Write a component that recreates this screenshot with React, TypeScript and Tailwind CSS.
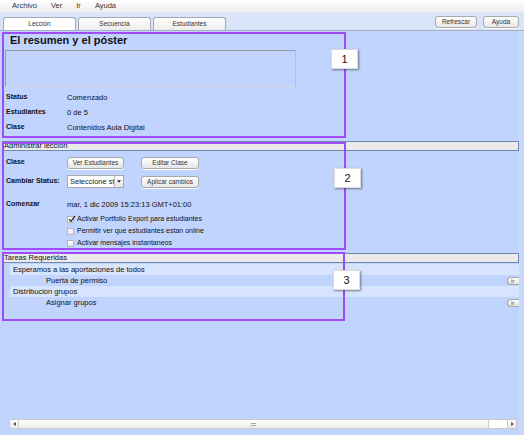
import React from "react";

const font = { fontFamily: '"Liberation Sans", Arial, sans-serif' };

function Btn({ children, w }: { children: React.ReactNode; w: string }) {
  return (
    <div
      className={`${w} h-[12px] flex items-center justify-center rounded-[3px] border border-[#a9a9a9] bg-gradient-to-b from-white to-[#e6e6e6] text-[6.5px] text-[#333] whitespace-nowrap shadow-[0_1px_0_#fff]`}
    >
      {children}
    </div>
  );
}

function Tab({ label, active }: { label: string; active?: boolean }) {
  return (
    <div
      className={`w-[73px] h-[13px] flex items-center justify-center rounded-t-[3px] border border-b-0 border-[#a3a9b5] text-[6.5px] text-[#333] ${
        active ? "bg-white" : "bg-gradient-to-b from-white to-[#ececec]"
      }`}
    >
      {label}
    </div>
  );
}

function Marker({ n, cls }: { n: string; cls: string }) {
  return (
    <div
      className={`absolute ${cls} w-[27px] h-[20px] bg-white flex items-center justify-center text-[11px] text-[#111] shadow-[1px_1px_2px_rgba(0,0,0,0.45)] border border-[#ddd]`}
    >
      {n}
    </div>
  );
}

function Check({ label, checked }: { label: string; checked?: boolean }) {
  return (
    <div className="h-[12px] flex items-center pl-[67px]">
      <div className="w-[7px] h-[7px] border border-[#b5b5b5] bg-gradient-to-b from-white to-[#e8e8e8] relative">
        {checked && (
          <svg viewBox="0 0 8 8" className="absolute -top-[2px] left-0 w-[8px] h-[8px]">
            <path d="M1.2 4.2 L3 6.3 L7 0.8" stroke="#222" strokeWidth="1.2" fill="none" />
          </svg>
        )}
      </div>
      <span className="ml-[3px] text-[7px] text-[#111]">{label}</span>
    </div>
  );
}

function HeaderBar({ label }: { label: string }) {
  return (
    <div className="ml-[2px] w-[517px] h-[10px] bg-[#ebebeb] border border-[#6f89aa] flex items-center pl-[1px] text-[7.5px] text-[#111] leading-none">
      {label}
    </div>
  );
}

function IrBtn() {
  return (
    <div className="ml-auto w-[12px] h-[8px] rounded-l-[4px] border border-r-0 border-[#a5a5a5] bg-gradient-to-b from-white to-[#e3e3e3] text-[5.5px] leading-[6px] pl-[3px] text-[#444]">
      Ir
    </div>
  );
}

const label = "w-[67px] shrink-0 pl-[6px] font-bold whitespace-nowrap text-[7px]";

export default function App() {
  return (
    <div className="w-[524px] h-[435px] overflow-hidden relative flex flex-col bg-[#c1d4fd]" style={font}>
      {/* menu */}
      <div className="h-[12px] shrink-0 bg-gradient-to-b from-white to-[#ededed] flex items-center pl-[12px] gap-[14px] text-[7.5px] text-[#333]">
        <span>Archivo</span>
        <span>Ver</span>
        <span>Ir</span>
        <span>Ayuda</span>
      </div>

      {/* tabs */}
      <div className="h-[19px] shrink-0 bg-[#d9e4f8] border-b border-[#a8afbd] flex items-end pl-[3px] pr-[5px] relative">
        <div className="flex gap-[2px]">
          <Tab label="Lección" active />
          <Tab label="Secuencia" />
          <Tab label="Estudiantes" />
        </div>
        <div className="ml-auto flex gap-[6px] self-center mt-[2px]">
          <Btn w="w-[42px]">Refrescar</Btn>
          <Btn w="w-[36px]">Ayuda</Btn>
        </div>
      </div>

      <div className="flex-1 flex">
        <div className="w-[519px] flex flex-col">
          {/* section 1 */}
          <div className="relative h-[107px]">
            <div className="h-[18px] leading-[18px] pl-[10px] text-[11px] font-bold text-[#111]">
              El resumen y el póster
            </div>
            <div className="ml-[5px] mt-[1px] w-[291px] h-[37px] border border-[#9a9a9a] border-b-[#d8d8d8] border-r-[#bdbdbd] bg-[#c1d4fd]" />
            {[
              ["Status", "Comenzado"],
              ["Estudiantes", "0 de 5"],
              ["Clase", "Contenidos Aula Digital"],
            ].map(([k, v], i) => (
              <div key={k} className={`h-[15px] flex items-center text-[7.5px] text-[#111] ${i === 0 ? "mt-[3px]" : ""}`}>
                <span className={label}>{k}</span>
                <span>{v}</span>
              </div>
            ))}
            <div className="absolute top-[1px] left-[2px] w-[344px] h-[106px] border-2 border-[#9d4cf6] pointer-events-none" />
          </div>

          {/* section 2 */}
          <div className="relative mt-[3px]">
            <HeaderBar label="Administrar lección" />
            <div className="h-[13px] mt-[5px] flex items-center text-[8px] text-[#111]">
              <span className={label}>Clase</span>
              <Btn w="w-[57px]">Ver Estudiantes</Btn>
              <div className="w-[17px]" />
              <Btn w="w-[58px]">Editar Clase</Btn>
            </div>
            <div className="h-[13px] mt-[6px] flex items-center text-[8px] text-[#111]">
              <span className={label}>Cambiar Status:</span>
              <div className="w-[57px] h-[13px] flex border border-[#aaa] bg-white">
                <span className="flex-1 overflow-hidden whitespace-nowrap text-[7.5px] pl-[2px] leading-[11px] text-[#222]">Seleccione st</span>
                <div className="w-[9px] border-l border-[#bbb] bg-gradient-to-b from-white to-[#e6e6e6] flex items-center justify-center">
                  <svg viewBox="0 0 6 4" className="w-[4px] h-[3px]">
                    <path d="M0 0 L6 0 L3 4 Z" fill="#222" />
                  </svg>
                </div>
              </div>
              <div className="w-[17px]" />
              <Btn w="w-[58px]">Aplicar cambios</Btn>
            </div>
            <div className="h-[13px] mt-[10px] flex items-center text-[7.5px] text-[#111]">
              <span className={label}>Comenzar</span>
              <span>mar, 1 dic 2009 15:23:13 GMT+01:00</span>
            </div>
            <div className="mt-[2px]">
              <Check label="Activar Portfolio Export para estudiantes" checked />
              <Check label="Permitir ver que estudiantes estan online" />
              <Check label="Activar mensajes instantaneos" />
            </div>
            <div className="absolute top-[1px] left-[2px] w-[344px] h-[108px] border-2 border-[#9d4cf6] pointer-events-none" />
          </div>

          {/* section 3 */}
          <div className="relative mt-[4px]">
            <HeaderBar label="Tareas Requeridas" />
            <div className="mt-[1px] text-[7.5px] text-[#111]">
              <div className="ml-[10px] h-[11px] flex items-center pl-[3px] bg-[#d6e4fd]">Esperamos a las aportaciones de todos</div>
              <div className="ml-[10px] h-[11px] flex items-center pl-[36px]">
                <span>Puerta de permiso</span>
                <IrBtn />
              </div>
              <div className="ml-[10px] h-[11px] flex items-center pl-[3px] bg-[#d6e4fd]">Distribución grupos</div>
              <div className="ml-[10px] h-[11px] flex items-center pl-[36px]">
                <span>Asignar grupos</span>
                <IrBtn />
              </div>
            </div>
            <div className="absolute -top-[1px] left-[2px] w-[343px] h-[69px] border-2 border-[#9d4cf6] pointer-events-none" />
          </div>

          <div className="flex-1" />

          {/* horizontal scrollbar */}
          <div className="ml-[9px] w-[508px] h-[10px] mb-[6px] flex border border-[#c9c9c9] bg-white">
            <div className="w-[9px] border-r border-[#cfcfcf] bg-gradient-to-b from-white to-[#e9e9e9] flex items-center justify-center">
              <svg viewBox="0 0 4 6" className="w-[3px] h-[4px]"><path d="M4 0 L4 6 L0 3 Z" fill="#444" /></svg>
            </div>
            <div className="w-[470px] bg-gradient-to-b from-white to-[#ececec] border-r border-[#cfcfcf] flex items-center justify-center">
              <div className="w-[5px] h-[3px] border-y border-[#aaa]" />
            </div>
            <div className="flex-1 bg-white" />
            <div className="w-[9px] border-l border-[#cfcfcf] bg-gradient-to-b from-white to-[#e9e9e9] flex items-center justify-center">
              <svg viewBox="0 0 4 6" className="w-[3px] h-[4px]"><path d="M0 0 L0 6 L4 3 Z" fill="#444" /></svg>
            </div>
          </div>
        </div>
        <div className="flex-1 bg-[#c9d9fc]" />
      </div>

      <Marker n="1" cls="left-[331px] top-[49px]" />
      <Marker n="2" cls="left-[334px] top-[168px]" />
      <Marker n="3" cls="left-[333px] top-[270px]" />
    </div>
  );
}
